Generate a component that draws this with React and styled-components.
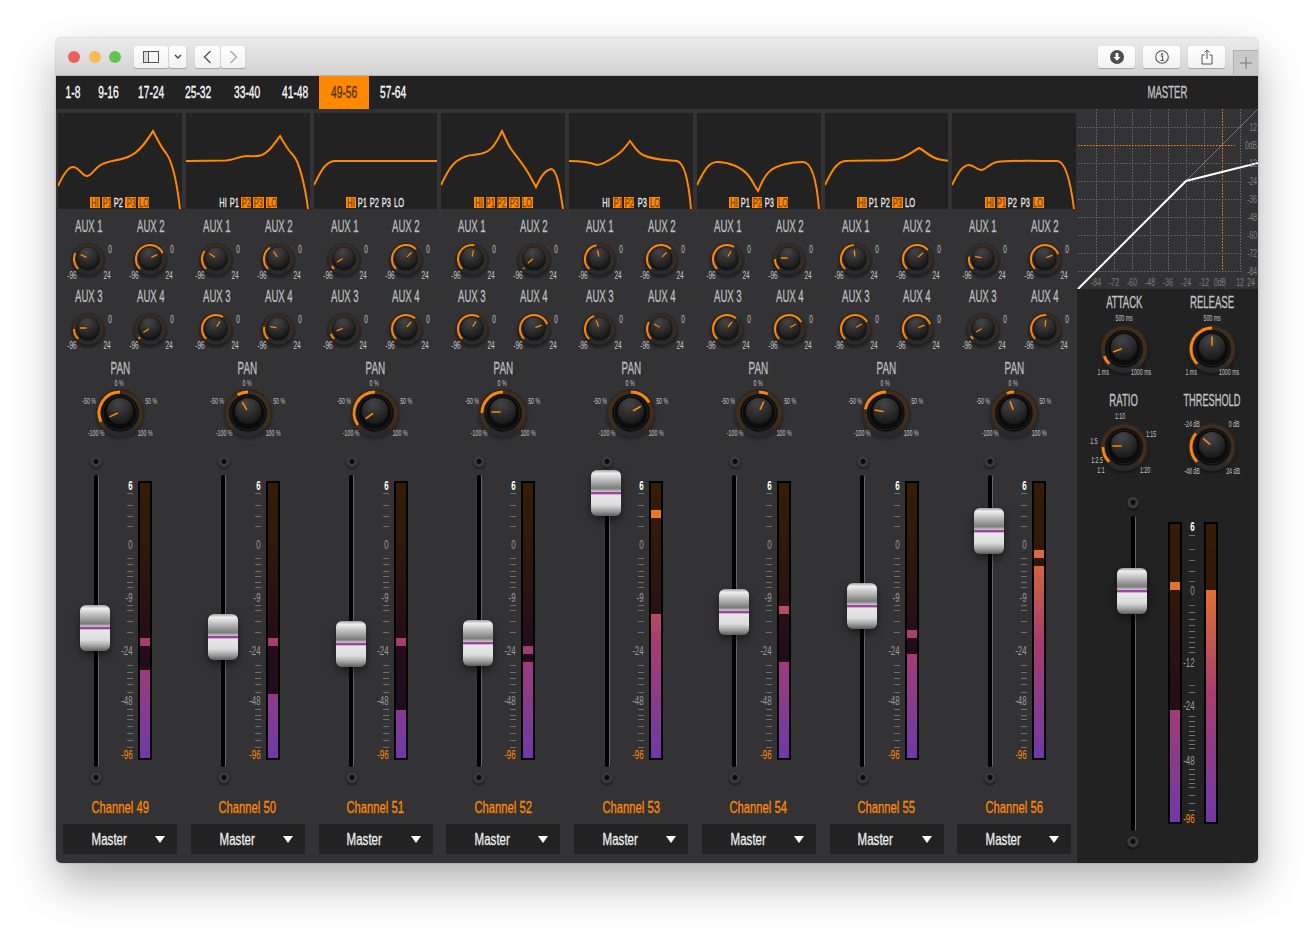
import React from 'react'
import styled, { createGlobalStyle } from 'styled-components'

const FONT = '"Liberation Sans", Arial, sans-serif'
const ORANGE = '#ff8800'

const channels = [
    { n: 49, aux: [-65, 65, -90, -125], pan: -115, eq: 'M0 73C5 62 10 54 15 54C21 54 24 63 29 63C34 63 38 52 47 50C56 47 64 47 72 43C82 39 90 26 95 18C99 25 102 33 108 40C114 48 119 70 122 96', bands: 'HI P1 P3 LO', top: 605, peak: 638, level: 670 },
    { n: 50, aux: [-55, -35, 30, -80], pan: -30, eq: 'M0 48L40 47.5C48 47 54 43 61 43C66 43 70 44 76 42C84 39 90 28 94 23C98 30 101 36 107 42C113 48 119 72 122 96', bands: 'P2 P3 LO', top: 614, peak: 638, level: 694 },
    { n: 51, aux: [-120, 45, -110, 40], pan: -125, eq: 'M0 72C6 60 11 49 20 48L124 48', bands: 'HI', top: 621, peak: 638, level: 710 },
    { n: 52, aux: [10, -130, 30, 70], pan: -90, eq: 'M0 72C6 60 10 52 16 48C22 44 28 42 32 42C38 41 42 41 47 38C54 34 58 24 61 18C64 24 66 30 70 36C76 44 83 52 89 63L95 74C98 68 102 58 110 56C116 56 119 76 122 96', bands: 'HI P1 P2 P3 LO', top: 620, peak: 646, level: 662 },
    { n: 53, aux: [-10, 45, -20, -60], pan: 60, eq: 'M0 48C10 48 20 49 28 52C34 52 42 46 48 42C54 38 58 32 61 28C65 33 68 39 74 42C84 47 98 47 108 48C116 50 120 72 122 96', bands: 'P1 P2 LO', top: 470, peak: 510, level: 614 },
    { n: 54, aux: [30, -90, 40, 60], pan: 25, eq: 'M0 72C6 60 11 49 20 49C32 49 44 54 51 62C56 68 58 74 61 78C64 72 66 64 73 58C80 52 94 49 106 49C116 49 120 72 122 96', bands: 'HI P2 LO', top: 589, peak: 606, level: 662 },
    { n: 55, aux: [-5, 50, 60, 70], pan: -80, eq: 'M0 72C6 60 11 49 20 48C36 47 60 48 68 47C80 46 88 38 94 35C100 38 104 43 110 45C114 47 119 47 124 48', bands: 'HI P3', top: 583, peak: 630, level: 654 },
    { n: 56, aux: [-80, 70, -120, 5], pan: -20, eq: 'M0 72C5 62 10 52 17 52C22 52 25 57 29 57C34 57 38 50 45 49C58 47 90 48 105 48C114 48 119 72 122 96', bands: 'HI P1 LO', top: 508, peak: 550, level: 566 },
]

const tabs = [['1-8', 33], ['9-16', 40], ['17-24', 45], ['25-32', 49], ['33-40', 49], ['41-48', 47], ['49-56', 50], ['57-64', 48]]
const bandNames = [['HI', 10], ['P1', 9], ['P2', 10], ['P3', 11], ['LO', 11]]

const chanTicks = [493, 505, 516, 526, 558, 564, 571, 576, 582, 587, 605, 610, 621, 632, 665, 672, 678, 684, 692, 709, 715, 719, 726, 733, 740, 747]
const chanMarks = [[6, 485], [0, 545], [-9, 598], [-24, 651], [-48, 701], [-96, 755]]
const masterTicks = [535, 549, 560, 571, 581, 605, 612, 619, 625, 631, 637, 642, 647, 652, 685, 692, 716, 721, 726, 731, 735, 740, 744, 748, 769, 774, 779, 783, 787, 795, 803, 810]
const masterMarks = [[6, 526], [0, 591], [-12, 663], [-24, 706], [-48, 761], [-96, 819]]

function polar(cx, cy, r, deg) {
    const a = (deg - 90) * Math.PI / 180
    return [cx + r * Math.cos(a), cy + r * Math.sin(a)]
}

function arc(cx, cy, r, from, to) {
    const [x1, y1] = polar(cx, cy, r, from)
    const [x2, y2] = polar(cx, cy, r, to)
    const large = Math.abs(to - from) > 180 ? 1 : 0
    const sweep = to > from ? 1 : 0
    return `M${x1} ${y1}A${r} ${r} 0 ${large} ${sweep} ${x2} ${y2}`
}

function KnobFace({ cx, cy, big, value, from = -135 }) {
    const R = big ? 24 : 16
    const arcR = big ? 21 : 14
    const [x1, y1] = polar(cx, cy - 1, big ? 3 : 2, value)
    const [x2, y2] = polar(cx, cy - 1, big ? 11 : 7.5, value)
    return (
        <>
            <circle cx={cx} cy={cy + 2} r={R + 3} fill="url(#knobHalo)" />
            <circle cx={cx} cy={cy} r={R} fill="#2a2a2b" />
            <path d={arc(cx, cy, arcR, -135, 135)} fill="none" stroke="#4a2c12" strokeWidth={big ? 2.6 : 1.2} />
            <path d={arc(cx, cy, arcR, from, value)} fill="none" stroke={ORANGE} strokeWidth={big ? 2.8 : 2} />
            {big && <circle cx={cx} cy={cy} r={18} fill="#0c0c0c" stroke="#000" strokeWidth="1" />}
            {big && <circle cx={cx} cy={cy} r={17} fill="none" stroke="#3c3c3c" strokeWidth=".5" />}
            {!big && <circle cx={cx} cy={cy} r={11.5} fill="#141414" />}
            <circle cx={cx} cy={cy - (big ? 2 : 1)} r={big ? 13 : 10.5} fill="url(#knobDome)" />
            <line x1={x1} y1={y1} x2={x2} y2={y2} stroke={ORANGE} strokeWidth={big ? 1.6 : 1.3} strokeLinecap="round" />
        </>
    )
}

function AuxKnob({ value }) {
    return (
        <KnobSvg width="61" height="46">
            <KnobFace cx={30} cy={23} value={value} />
            <KnobText x={14} y={43} $size={10.5}>-96</KnobText>
            <KnobText x={49} y={43} $size={10.5}>24</KnobText>
            <KnobText x={52} y={17} $size={10.5}>0</KnobText>
        </KnobSvg>
    )
}

function PanKnob({ value }) {
    return (
        <KnobSvg width="100" height="70">
            <KnobFace cx={50} cy={35} big value={value} from={0} />
            <KnobText x={49} y={8} $size={8.5}>0 %</KnobText>
            <KnobText x={19} y={26} $size={8.5}>-50 %</KnobText>
            <KnobText x={81} y={26} $size={8.5}>50 %</KnobText>
            <KnobText x={26} y={58} $size={8.5}>-100 %</KnobText>
            <KnobText x={75} y={58} $size={8.5}>100 %</KnobText>
        </KnobSvg>
    )
}

function MasterKnob({ value, labels }) {
    return (
        <KnobSvg width="88" height="76">
            <KnobFace cx={44} cy={38} big value={value} />
            {labels.map(([t, dx, dy]) => (
                <KnobText key={t} x={44 + dx} y={38 + dy + 3} $size={8.5}>{t}</KnobText>
            ))}
        </KnobSvg>
    )
}

function Fader({ top, origin }) {
    return (
        <FaderCol>
            <Screw />
            <Track />
            <Screw />
            <Handle style={{ top: top - origin }} />
        </FaderCol>
    )
}

function Meter({ from, to, peak, level }) {
    return (
        <MeterBox style={{ height: to - from }}>
            {peak == null ? (
                <Dim style={{ height: level - from - 2 }} />
            ) : (
                <>
                    <Dim style={{ height: peak - from - 2 }} />
                    <PeakGap />
                    <Dim style={{ height: level - peak - 8 }} />
                </>
            )}
        </MeterBox>
    )
}

function Scale({ ticks, marks, from, height, width, right }) {
    return (
        <ScaleSvg width={width} height={height}>
            {ticks.map(y => <line key={y} x1={right - 6} x2={right} y1={y - from + .5} y2={y - from + .5} stroke="#6f6f6f" strokeWidth="1" />)}
            {marks.map(([v, y]) => (
                <ScaleText key={v} x={right - .5} y={y - from + 4.5} $top={v === 6} $low={v === -96}>{v}</ScaleText>
            ))}
        </ScaleSvg>
    )
}

function Strip({ ch }) {
    const on = ch.bands.split(' ')
    return (
        <StripCol>
            <EqPanel>
                <EqSvg width="124" height="96" viewBox="0 0 124 96">
                    <path d={ch.eq} fill="none" stroke={ORANGE} strokeWidth="2" />
                </EqSvg>
                <Bands>
                    {bandNames.map(([b, w]) => (
                        <Band key={b} $on={on.includes(b)} $w={w}><Squeeze $x={.62}>{b}</Squeeze></Band>
                    ))}
                </Bands>
            </EqPanel>
            <AuxGrid>
                {ch.aux.map((v, i) => (
                    <KnobCell key={i}>
                        <KnobLabel><Squeeze $x={.58}>AUX {i + 1}</Squeeze></KnobLabel>
                        <AuxKnob value={v} />
                    </KnobCell>
                ))}
            </AuxGrid>
            <PanCell>
                <KnobLabel><Squeeze $x={.6}>PAN</Squeeze></KnobLabel>
                <PanKnob value={ch.pan} />
            </PanCell>
            <FaderRow>
                <Fader top={ch.top} origin={455} />
                <Scale ticks={chanTicks} marks={chanMarks} from={481} height={280} width={20} right={15} />
                <Meter from={481} to={760} peak={ch.peak} level={ch.level} />
            </FaderRow>
            <ChannelName><Squeeze $x={.68}>Channel {ch.n}</Squeeze></ChannelName>
            <Select>
                <SelectText><Squeeze $x={.7}>Master</Squeeze></SelectText>
                <Caret />
            </Select>
        </StripCol>
    )
}

function Graph() {
    const v = [0, 1, 2, 3, 4, 5, 6, 7, 8]
    const xLabels = [['-84', 19], ['-72', 37], ['-60', 55], ['-48', 73], ['-36', 91], ['-24', 109], ['-12', 127], ['0dB', 143], ['12', 163], ['24', 174]]
    const yLabels = ['12', '0dB', '-12', '-24', '-36', '-48', '-60', '-72', '-84']
    return (
        <GraphSvg width="181" height="180">
            {v.map(i => (
                <GridLine key={i} x1={19.5 + i * 18} x2={19.5 + i * 18} y1="0" y2="162" $hot={i === 7} />
            ))}
            {v.map(i => (
                <GridLine key={i} x1="1" x2={i === 1 ? 158 : 165} y1={18.5 + i * 18} y2={18.5 + i * 18} $hot={i === 1} />
            ))}
            <line x1="109" y1="72" x2="181" y2="0" stroke="#8a8a8a" strokeWidth=".8" />
            <path d="M1 180L109 72L181 54" fill="none" stroke="#fff" strokeWidth="2" />
            {yLabels.map((t, i) => <GraphText key={t} x="180" y={22 + i * 18} $end>{t}</GraphText>)}
            {xLabels.map(([t, x]) => <GraphText key={t} x={x} y="177">{t}</GraphText>)}
        </GraphSvg>
    )
}

function Chrome() {
    return (
        <TitleBar>
            <Lights>
                <Light $c="#ec5f59" />
                <Light $c="#f5bd4f" />
                <Light $c="#61c554" />
            </Lights>
            <Group>
                <ToolBtn $w={35}>
                    <svg width="16" height="12" viewBox="0 0 16 12" fill="none" stroke="#555"><rect x=".5" y=".5" width="15" height="11" /><line x1="5.5" y1="1" x2="5.5" y2="11" /><rect x="1" y="1" width="4" height="10" fill="#ddd" stroke="none" /></svg>
                </ToolBtn>
                <ToolBtn $w={18}>
                    <svg width="8" height="6" viewBox="0 0 8 6" fill="none" stroke="#444" strokeWidth="1.4"><path d="M1 1l3 3 3-3" /></svg>
                </ToolBtn>
            </Group>
            <Group>
                <ToolBtn $w={26}>
                    <svg width="9" height="14" viewBox="0 0 9 14" fill="none" stroke="#555" strokeWidth="1.4"><path d="M7.5 1L1.5 7l6 6" /></svg>
                </ToolBtn>
                <ToolBtn $w={25}>
                    <svg width="9" height="14" viewBox="0 0 9 14" fill="none" stroke="#aaa" strokeWidth="1.4"><path d="M1.5 1l6 6-6 6" /></svg>
                </ToolBtn>
            </Group>
            <RightTools>
                <RoundBtn>
                    <svg width="14" height="14" viewBox="0 0 14 14"><circle cx="7" cy="7" r="7" fill="#4d4d4d" /><path d="M5.6 3h2.8v4h2.2L7 10.800 3.400 7h2.200z" fill="#fff" /></svg>
                </RoundBtn>
                <RoundBtn>
                    <svg width="14" height="14" viewBox="0 0 14 14" fill="none"><circle cx="7" cy="7" r="6.300" stroke="#555" strokeWidth="1.100" /><circle cx="7" cy="4" r="1" fill="#555" /><path d="M5.600 6h2v4M5.400 10.500h3.400" stroke="#555" strokeWidth="1.100" /></svg>
                </RoundBtn>
                <RoundBtn>
                    <svg width="12" height="16" viewBox="0 0 12 16" fill="none" stroke="#555" strokeWidth="1"><path d="M3.500 6H1v9h10V6H8.500M6 10V1M3.500 3.400L6 1l2.500 2.400" /></svg>
                </RoundBtn>
            </RightTools>
            <NewTab>
                <svg width="12" height="12" viewBox="0 0 12 12" stroke="#777" strokeWidth="1"><path d="M6 0v12M0 6h12" /></svg>
            </NewTab>
        </TitleBar>
    )
}

const timeLabels = [['500 ms', 0, -31], ['1 ms', -21, 23], ['1000 ms', 17, 23]]
const ratioLabels = [['1:10', -4, -31], ['1:15', 27, -13], ['1:5', -30, -6], ['1:2.5', -27, 13], ['1:1', -23, 23], ['1:20', 21, 23]]
const thresholdLabels = [['-24 dB', -20, -23], ['0 dB', 22, -23], ['-48 dB', -20, 24], ['24 dB', 21, 24]]

export default function App() {
    return (
        <Page>
            <GlobalStyle />
            <DefsSvg>
                <defs>
                    <radialGradient id="knobDome" cx=".42" cy=".22" r=".85">
                        <stop offset="0" stopColor="#444446" />
                        <stop offset=".55" stopColor="#2b2b2c" />
                        <stop offset="1" stopColor="#141414" />
                    </radialGradient>
                    <radialGradient id="knobHalo">
                        <stop offset=".75" stopColor="#000" stopOpacity=".45" />
                        <stop offset="1" stopColor="#000" stopOpacity="0" />
                    </radialGradient>
                </defs>
            </DefsSvg>
            <Window>
                <Chrome />
                <TabBar>
                    <Tabs>
                        {tabs.map(([t, w]) => <Tab key={t} $w={w} $active={t === '49-56'}><Squeeze $x={.62}>{t}</Squeeze></Tab>)}
                    </Tabs>
                    <MasterTitle><Squeeze $x={.58}>MASTER</Squeeze></MasterTitle>
                </TabBar>
                <Body>
                    <Channels>
                        {channels.map(ch => <Strip key={ch.n} ch={ch} />)}
                    </Channels>
                    <MasterCol>
                        <Graph />
                        <MasterPanel>
                            <MasterGrid>
                                <KnobCell>
                                    <MasterLabel><Squeeze $x={.58}>ATTACK</Squeeze></MasterLabel>
                                    <MasterKnob value={-110} labels={timeLabels} />
                                </KnobCell>
                                <KnobCell>
                                    <MasterLabel><Squeeze $x={.58}>RELEASE</Squeeze></MasterLabel>
                                    <MasterKnob value={0} labels={timeLabels} />
                                </KnobCell>
                                <KnobCell>
                                    <MasterLabel><Squeeze $x={.58}>RATIO</Squeeze></MasterLabel>
                                    <MasterKnob value={-90} labels={ratioLabels} />
                                </KnobCell>
                                <KnobCell>
                                    <MasterLabel><Squeeze $x={.56}>THRESHOLD</Squeeze></MasterLabel>
                                    <MasterKnob value={-50} labels={thresholdLabels} />
                                </KnobCell>
                            </MasterGrid>
                            <MasterFaderRow>
                                <Fader top={568} origin={496} />
                                <MeterGap />
                                <Meter from={522} to={824} peak={582} level={710} />
                                <Scale ticks={masterTicks} marks={masterMarks} from={522} height={304} width={22} right={13} />
                                <Meter from={522} to={824} level={590} />
                            </MasterFaderRow>
                        </MasterPanel>
                    </MasterCol>
                </Body>
            </Window>
        </Page>
    )
}

const GlobalStyle = createGlobalStyle`
    body {
        margin: 0;
        background: #fff;
        font-family: ${FONT};
    }
`
const Page = styled.div`
    min-height: 938px;
    box-sizing: border-box;
    padding: 38px 56px 0;
    overflow: hidden;
`
const DefsSvg = styled.svg`
    position: absolute;
    width: 0;
    height: 0;
`
const Squeeze = styled.span`
    display: inline-block;
    white-space: nowrap;
    transform: scaleX(${p => p.$x});
    -webkit-text-stroke: .3px currentColor;
`
const Window = styled.div`
    width: 1202px;
    height: 825px;
    display: flex;
    flex-direction: column;
    border-radius: 5px;
    overflow: hidden;
    box-shadow: 0 20px 45px rgba(0, 0, 0, .3), 0 0 2px rgba(0, 0, 0, .3);
`
const TitleBar = styled.div`
    height: 38px;
    flex: none;
    display: flex;
    align-items: center;
    padding-left: 12px;
    position: relative;
    background: linear-gradient(#ebebeb, #d3d3d3);
    border-bottom: 1px solid #b5b5b5;
    box-sizing: border-box;
`
const Lights = styled.div`
    display: flex;
    gap: 8.5px;
    margin-right: 13px;
`
const Light = styled.span`
    width: 12px;
    height: 12px;
    border-radius: 50%;
    background: ${p => p.$c};
`
const Group = styled.div`
    display: flex;
    margin-right: 8px;
`
const ToolBtn = styled.div`
    width: ${p => p.$w}px;
    height: 22px;
    box-sizing: border-box;
    display: flex;
    align-items: center;
    justify-content: center;
    background: linear-gradient(#fff, #f2f2f2);
    border-radius: 3px;
    box-shadow: 0 1px 1px rgba(0, 0, 0, .25);
    border-right: 1px solid #d8d8d8;
`
const RightTools = styled.div`
    display: flex;
    gap: 8px;
    margin-left: auto;
    margin-right: 33px;
`
const RoundBtn = styled.div`
    width: 37px;
    height: 22px;
    display: flex;
    align-items: center;
    justify-content: center;
    background: linear-gradient(#fff, #f2f2f2);
    border-radius: 3px;
    box-shadow: 0 1px 1px rgba(0, 0, 0, .25);
`
const NewTab = styled.div`
    position: absolute;
    right: 0;
    bottom: 0;
    width: 25px;
    height: 25px;
    display: flex;
    align-items: center;
    justify-content: center;
    background: #c9c9c9;
    border-left: 1px solid #b0b0b0;
    border-top: 1px solid #b0b0b0;
    box-sizing: border-box;
`
const TabBar = styled.div`
    height: 33px;
    flex: none;
    display: flex;
    justify-content: space-between;
    background: #222223;
`
const Tabs = styled.div`
    display: flex;
`
const Tab = styled.div`
    width: ${p => p.$w}px;
    display: flex;
    align-items: center;
    justify-content: center;
    font-size: 16.5px;
    color: ${p => (p.$active ? '#4a3010' : '#fff')};
    background: ${p => (p.$active ? ORANGE : 'transparent')};
`
const MasterTitle = styled.div`
    width: 181px;
    display: flex;
    align-items: center;
    justify-content: center;
    font-size: 16.5px;
    color: #c4c4c4;
`
const Body = styled.div`
    flex: 1;
    display: flex;
    min-height: 0;
`
const Channels = styled.div`
    width: 1021px;
    box-sizing: border-box;
    padding: 4px 1px 0 2px;
    display: grid;
    grid-template-columns: repeat(8, 1fr);
    column-gap: 4px;
    background: #333335;
`
const StripCol = styled.div`
    display: flex;
    flex-direction: column;
    min-width: 0;
`
const EqPanel = styled.div`
    height: 96px;
    background: #222223;
    position: relative;
    overflow: hidden;
`
const EqSvg = styled.svg`
    display: block;
`
const Bands = styled.div`
    position: absolute;
    left: 0;
    right: 0;
    bottom: 1px;
    display: flex;
    justify-content: center;
    gap: 2px;
`
const Band = styled.span`
    width: ${p => p.$w}px;
    height: 11px;
    display: flex;
    align-items: center;
    justify-content: center;
    font-size: 12px;
    color: ${p => (p.$on ? '#7a4400' : '#e8e8e8')};
    background: ${p => (p.$on ? ORANGE : 'transparent')};
`
const AuxGrid = styled.div`
    display: grid;
    grid-template-columns: 1fr 1fr;
    row-gap: 4px;
    margin-top: 7px;
`
const KnobCell = styled.div`
    display: flex;
    flex-direction: column;
    align-items: center;
`
const KnobLabel = styled.div`
    height: 20px;
    display: flex;
    align-items: center;
    justify-content: center;
    font-size: 16.5px;
    color: #bdbdbd;
`
const KnobSvg = styled.svg`
    display: block;
    overflow: visible;
`
const KnobText = styled.text`
    font-family: ${FONT};
    font-size: ${p => p.$size}px;
    fill: #c4c4c4;
    text-anchor: middle;
    transform-box: fill-box;
    transform-origin: center;
    transform: scaleX(.62);
`
const PanCell = styled.div`
    display: flex;
    flex-direction: column;
    align-items: center;
    margin-top: 6px;
`
const FaderRow = styled.div`
    display: flex;
    align-items: flex-start;
    margin-top: 7px;
    height: 330px;
`
const FaderCol = styled.div`
    width: 44px;
    margin-left: 16px;
    flex: none;
    position: relative;
    display: flex;
    flex-direction: column;
    align-items: center;
    justify-content: space-between;
    align-self: stretch;
`
const Screw = styled.div`
    width: 12px;
    height: 12px;
    margin: 1px 0 1px;
    border-radius: 50%;
    background: radial-gradient(circle at 50% 45%, #0c0c0c 0 25%, #3a3a3a 32% 55%, #181818 80%);
    box-shadow: 0 1px 2px rgba(0, 0, 0, .6);
`
const Track = styled.div`
    flex: 1;
    width: 4px;
    margin: 6px 0 4px;
    background: #000;
    border-right: 1px solid #666;
    border-radius: 2px;
`
const Handle = styled.div`
    position: absolute;
    left: 6px;
    width: 30px;
    height: 46px;
    border-radius: 6px;
    background: linear-gradient(
        #9c9c9c 0%, #efefef 7%, #b4b4b4 24%, #7c7c7c 40%, #c4c4c4 47%,
        #a040a0 48%, #a040a0 52%, #e8e8e8 54%, #dcdcdc 76%, #a0a0a0 89%, #5c5c5c 100%
    );
    box-shadow: 0 4px 9px rgba(0, 0, 0, .5);
`
const ScaleSvg = styled.svg`
    display: block;
    flex: none;
    margin-top: 26px;
    overflow: visible;
`
const ScaleText = styled.text`
    font-family: ${FONT};
    font-size: 12px;
    text-anchor: end;
    fill: ${p => (p.$top ? '#fff' : p.$low ? ORANGE : '#9a9a9a')};
    font-weight: ${p => (p.$top ? 700 : 400)};
    transform-box: fill-box;
    transform-origin: right center;
    transform: scaleX(.66);
`
const MeterBox = styled.div`
    width: 14px;
    flex: none;
    box-sizing: border-box;
    margin-top: 26px;
    border: 2px solid #000;
    display: flex;
    flex-direction: column;
    background: linear-gradient(#f58010 0%, #e07030 22%, #a83c70 57%, #7038a8 100%);
`
const MeterGap = styled.div`
    width: 13px;
    flex: none;
`
const Dim = styled.div`
    flex: none;
    background: rgba(0, 0, 0, .78);
`
const PeakGap = styled.div`
    height: 8px;
    flex: none;
`
const ChannelName = styled.div`
    height: 20px;
    margin-top: 12px;
    display: flex;
    align-items: center;
    justify-content: center;
    font-size: 16.5px;
    color: ${ORANGE};
`
const Select = styled.div`
    width: 114px;
    height: 30px;
    margin: 7px 0 0 5px;
    display: flex;
    align-items: center;
    background: #222223;
    color: #eee;
    font-size: 16.5px;
`
const SelectText = styled.div`
    width: 92px;
    flex: none;
    display: flex;
    justify-content: center;
`
const Caret = styled.span`
    border-left: 5.5px solid transparent;
    border-right: 5.5px solid transparent;
    border-top: 7px solid #fff;
`
const MasterCol = styled.div`
    width: 181px;
    display: flex;
    flex-direction: column;
    background: #222223;
`
const GraphSvg = styled.svg`
    display: block;
    flex: none;
    background: #333335;
`
const GridLine = styled.line`
    stroke: ${p => (p.$hot ? ORANGE : '#6c6c6c')};
    stroke-width: 1;
    stroke-dasharray: 1.5 1.5;
`
const GraphText = styled.text`
    font-family: ${FONT};
    font-size: 10.5px;
    fill: #7e7e7e;
    text-anchor: ${p => (p.$end ? 'end' : 'middle')};
    transform-box: fill-box;
    transform-origin: ${p => (p.$end ? 'right center' : 'center')};
    transform: scaleX(.65);
`
const MasterPanel = styled.div`
    flex: 1;
    display: flex;
    flex-direction: column;
    padding: 4px 0 0 3px;
`
const MasterGrid = styled.div`
    display: grid;
    grid-template-columns: 88px 88px;
    row-gap: 4px;
`
const MasterLabel = styled.div`
    height: 18px;
    display: flex;
    align-items: center;
    justify-content: center;
    font-size: 16.5px;
    color: #c4c4c4;
`
const MasterFaderRow = styled.div`
    display: flex;
    align-items: flex-start;
    height: 353px;
    margin: 11px 0 0 15px;
`
